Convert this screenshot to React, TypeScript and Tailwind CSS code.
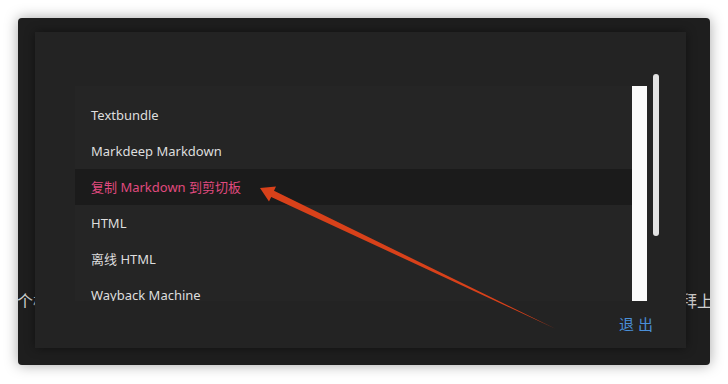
const items = [
  "Textbundle",
  "Markdeep Markdown",
  "复制 Markdown 到剪切板",
  "HTML",
  "离线 HTML",
  "Wayback Machine",
];

const font = { fontFamily: '"Noto Sans", "Noto Sans CJK SC", sans-serif' };

export default function App() {
  return (
    <div className="relative w-[728px] h-[384px] bg-white overflow-hidden" style={font}>
      <div className="relative ml-[18px] mt-[18px] w-[692px] h-[347px] rounded-[4px] bg-[#1e1e1e] shadow-[0_0_14px_rgba(0,0,0,0.35)] overflow-hidden">
        {/* page text behind the dialog */}
        <div className="absolute left-0 right-0 top-[273px] flex justify-between text-[16px] leading-[20px] text-[#cfcfcf]">
          <span className="-ml-[1px]">个栏</span>
          <span className="-mr-[3px]">拜上</span>
        </div>

        <div className="relative ml-[17px] mt-[14px] w-[651px] h-[316px] bg-[#232323] shadow-[0_0_10px_rgba(0,0,0,0.45)]">
          <div className="flex items-start">
            <div className="ml-[40px] mt-[54px] w-[557px] h-[215px] overflow-hidden bg-[#252525] pt-[11px]">
              {items.map((t, i) => (
                <div
                  key={t}
                  className={
                    i === 2
                      ? "h-[36px] flex items-center px-4 pt-[2px] text-[13px] bg-[#1b1b1b] text-[#e04a7f]"
                      : "h-[36px] flex items-center px-4 pt-[2px] text-[13px] text-[#dedede]"
                  }
                >
                  {t}
                </div>
              ))}
            </div>
            <div className="mt-[54px] w-[15px] h-[215px] bg-[#fafafa]" />
            <div className="ml-[6px] mt-[42px] w-[6px] h-[162px] rounded-full bg-[#e2e2e2]" />
          </div>
          <div className="flex justify-end pr-[33px] mt-[13px]">
            <span className="text-[15px] leading-[20px] tracking-[4px] text-[#4a8fd8] -mr-[4px]">退出</span>
          </div>
        </div>
      </div>

      <svg className="absolute inset-0 pointer-events-none" width="728" height="384" viewBox="0 0 728 384">
        <polygon
          points="260,188 276,186.5 274,190.8 556,329 271.2,197 269,201.5"
          fill="#d8411a"
        />
      </svg>
    </div>
  );
}
